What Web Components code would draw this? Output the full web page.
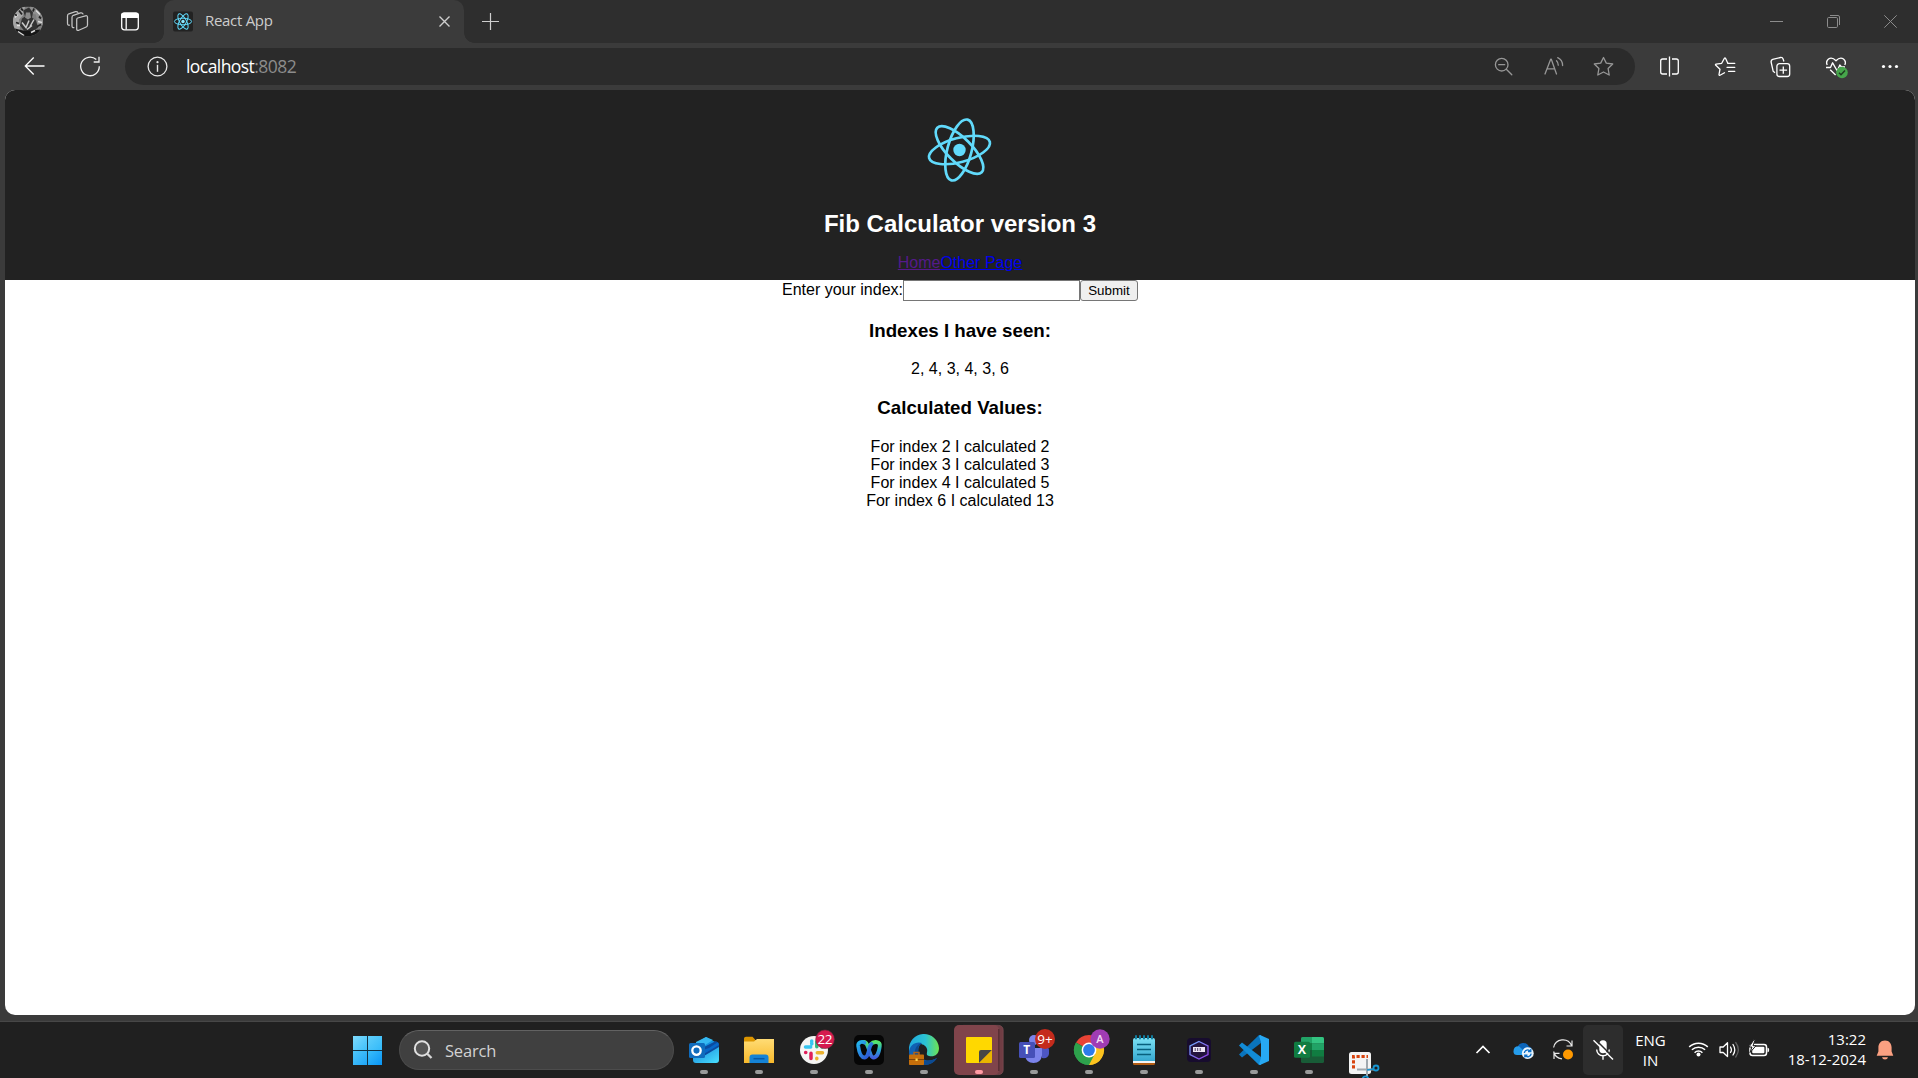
<!DOCTYPE html>
<html lang="en">
<head>
<meta charset="utf-8">
<title>React App</title>
<style>
html,body{margin:0;height:100%;overflow:hidden;background:#3b3b3b}
body{font-family:"Open Sans","Noto Sans",sans-serif}
</style>
</head>
<body>
<desktop-screen>
  <tab-strip slot="tabs"><span>React App</span></tab-strip>
  <nav-bar slot="nav"><span slot="host">localhost</span><span slot="port">:8082</span></nav-bar>
  <fib-page slot="page">
    <app-header slot="header"><span>Fib Calculator version 3</span></app-header>
    <index-form></index-form>
    <result-section heading="Indexes I have seen:">2, 4, 3, 4, 3, 6</result-section>
    <result-section heading="Calculated Values:">
      <div>For index 2 I calculated 2</div>
      <div>For index 3 I calculated 3</div>
      <div>For index 4 I calculated 5</div>
      <div>For index 6 I calculated 13</div>
    </result-section>
  </fib-page>
  <task-bar slot="taskbar"></task-bar>
</desktop-screen>

<script>
const define = (name, html, setup) => customElements.define(name, class extends HTMLElement {
  constructor() {
    super();
    this.attachShadow({mode: 'open'}).innerHTML = html;
  }
  connectedCallback() { if (setup) setup(this, this.shadowRoot); }
});

/* Line icons: each is drawn round the origin, in CSS pixels */
const ICONS = {
  avatar: `<defs><clipPath id="c"><circle r="15"/></clipPath><filter id="b"><feGaussianBlur stdDeviation=".5"/></filter></defs>
    <g clip-path="url(#c)"><rect x="-15" y="-15" width="30" height="30" fill="#7d7d7d"/><g filter="url(#b)">
    <path d="M-15-15H-3L-5-6-9-2-8 8-15 10Z" fill="#a6a6a6"/><path d="M2-15H15V4L9 2 8-7 3-8Z" fill="#8e8e8e"/>
    <path d="M-5-11L1-14 5-9 4-4 8-1 10 6 5 10-4 9-8 4-6-3-3-5Z" fill="#333"/><path d="M-2-9h4l1 5-3 2-3-2z" fill="#8a8a8a"/>
    <path d="M-6 1l4 5 3-7M2 5l4-7M-1 8l5-4" stroke="#c9c9c9" stroke-width="1.5" fill="none"/>
    <path d="M-13 7l8 2 9 0 8-1-1 7H-12z" fill="#191919"/><path d="M-10 10l6 4M3 11l4-2M-13-4l3-3M-11 4h3M8-11l4 4M10 0l4 1" stroke="#dedede" stroke-width="1.4"/>
    <path d="M-9-11l3 4M6-13l-1 3M-12 1l3 1M9 5l4-2M-13-7l2 1M11-5l2 2M-7-13l2 2" stroke="#222" stroke-width="1.8"/></g></g>`,
  workspaces: `<g fill="none" stroke="#c4c4c4" stroke-width="1.25" stroke-linejoin="round" stroke-linecap="round"><path d="M.2-3.5L8-5.7Q10-6.100 10-4.300V3.500Q10 5 8.700 5.500L1.300 8.800Q-.8 9.500-.8 7.400V-1.800Q-.8-3.200.2-3.500Z"/><path d="M-3.600 6.100Q-5.500 6.300-5.500 4.200V-4.100Q-5.500-5.600-4.100-6.200L3-8.600Q4.900-9.100 5.500-7.600"/><path d="M-8.100 3.700Q-10 3.900-10 1.800V-5.600Q-10-7.100-8.600-7.700L-2-9.900Q-.3-10.300.4-9"/></g>`,
  panel: `<rect x="-8.300" y="-8.300" width="16.600" height="16.600" rx="2.800" fill="none" stroke="#fff" stroke-width="1.3"/><path d="M-9-3.500V-6Q-9-9-6-9H6Q9-9 9-6V-3.500Z" fill="#fff"/><path d="M-3.800-4V8" stroke="#fff" stroke-width="1.3"/>`,
  favicon: `<rect x="-10" y="-10" width="20" height="20" rx="2" fill="#222"/><g fill="none" stroke="#61dafb" stroke-width="1"><ellipse rx="8.600" ry="3.300"/><ellipse rx="8.600" ry="3.300" transform="rotate(60)"/><ellipse rx="8.600" ry="3.300" transform="rotate(120)"/></g><circle r="1.700" fill="#8be8ff"/>`,
  tabclose: `<path d="M-5-5L5 5M5-5L-5 5" stroke="#cfcfcf" stroke-width="1.400"/>`,
  plus: `<path d="M-8.500 0H8.500M0-8.500V8.500" stroke="#cfcfcf" stroke-width="1.200"/>`,
  min: `<path d="M-6.500 0H6.500" stroke="#8c8c8c"/>`,
  restore: `<g fill="none" stroke="#8c8c8c"><rect x="-6.500" y="-4" width="10" height="10" rx="1.200"/><path d="M-4-6H4Q5.500-6 5.500-4.500V3.500"/></g>`,
  close: `<path d="M-6.200-6.200L6.200 6.200M6.200-6.200L-6.200 6.200" stroke="#8c8c8c"/>`,
  back: `<path d="M10-.5H-9M-.8-9L-9.200-.5-.8 8" fill="none" stroke="#fff" stroke-width="1.300"/>`,
  reload: `<path d="M6.300-6.900A9.300 9.300 0 1 0 9.300-.2M9-9.700V-4.500H3.700" fill="none" stroke="#f2f2f2" stroke-width="1.300"/>`,
  info: `<circle r="9.400" fill="none" stroke="#e6e6e6" stroke-width="1.300"/><path d="M0-1.700V5.300" stroke="#e6e6e6" stroke-width="1.400"/><circle cy="-4.300" r="1.100" fill="#e6e6e6"/>`,
  zoomout: `<g fill="none" stroke="#979797" stroke-width="1.300" stroke-linecap="round"><circle cx="-1.800" cy="-1.800" r="6.300"/><path d="M2.800 2.800L8.300 8.300M-4.800-1.800H1.200"/></g>`,
  read: `<g fill="none" stroke="#979797" stroke-width="1.300" stroke-linecap="round" stroke-linejoin="round"><path d="M-9 7.500L-3.300-7.300H-2.700L2.500 7.500M-6.700 2.300H.6"/><path d="M2.500-5.700Q4.200-4 4.300-1.300M3.700-8.800Q8.500-6.500 8.600-1"/></g>`,
  star: `<path d="M0-9L2.800-3.400 9.200-2.500 4.600 2 5.700 8.500 0 5.500-5.700 8.500-4.600 2-9.200-2.500-2.800-3.400Z" fill="none" stroke="#979797" stroke-width="1.300" stroke-linejoin="round"/>`,
  split: `<g fill="none" stroke="#fff" stroke-width="1.300"><path d="M-2.500-7.500H-6.800Q-8.800-7.500-8.800-5.500V5.500Q-8.800 7.500-6.800 7.500H-2.500M2.500-7.500H6.800Q8.800-7.500 8.800-5.500V5.500Q8.800 7.500 6.800 7.500H2.500M0-10V10"/></g>`,
  favs: `<g fill="none" stroke="#fff" stroke-width="1.300" stroke-linejoin="round" stroke-linecap="round"><path d="M2.800-3.200L.5-8.200Q0-9-.6-8.200L-3.300-3.200-9-2.400Q-10-2-9.200-1.300L-5 2.700-6 8Q-6 9.200-5 8.700L-.5 6.300"/><path d="M3-3.200H9.800M2 .8H9.800M3.500 4.800H9.800"/></g>`,
  collections: `<g fill="none" stroke="#fff" stroke-width="1.300" stroke-linejoin="round"><rect x="-3.600" y="-2.800" width="12.800" height="12.800" rx="2.500"/><path d="M2.800-.1V7.300M-1 3.600H6.600M-5.500 6.200L-7.300 4.800-9.400-4.500Q-9.700-6.500-7.800-7.200L0-9Q2-9.300 2.600-7.500L3.400-5"/></g>`,
  heart: `<g fill="none" stroke="#fff" stroke-width="1.350" stroke-linejoin="round"><path d="M-8.800-1.500Q-10.500-5-7.500-7.500-4-9.800 0-5.800 4-9.800 7.500-7.500 10.500-5 8.800-1.500M-5.800 3.200L-.4 8.600"/><path d="M-10 1H-5.500L-3.400-3.700 1.300 4.500 3.800-1.500 5.500.5H9"/></g><circle cx="6" cy="6" r="5.800" fill="#46a64b"/><path d="M3 6.200L5 8.200 9 4" stroke="#1d3b20" stroke-width="1.500" fill="none"/>`,
  dots: `<g fill="#fff"><circle cx="-6.500" r="1.600"/><circle r="1.600"/><circle cx="6.500" r="1.600"/></g>`,
  chevron: `<path d="M-6.500 3.500L0-3 6.500 3.500" fill="none" stroke="#fff" stroke-width="1.700"/>`,
  onedrive: `<path d="M-5.500-2A6 6 0 0 1 5.800-3Q9-2.500 9 1L-3 5Z" fill="#0c64b8"/><path d="M-9.500 2Q-9.500-3.500-4-3.200L5 5.500H-6Q-9.500 5.500-9.500 2Z" fill="#259ceb"/><circle cx="4.800" cy="3.700" r="5.900" fill="#e8f4fd"/><path d="M1.300 3.500A3.500 3.500 0 0 1 7.500 1.700M7.800-.5V2H5M8.200 4.100A3.500 3.500 0 0 1 2 5.900M1.800 8.100V5.700H4.500" fill="none" stroke="#0b6fc8" stroke-width="1.300"/>`,
  sync: `<path d="M-9.400-2A9.500 9.500 0 0 1 8.600-4M9-9V-3.500H3.500M-9.400 2A9.500 9.500 0 0 0-1 9.300M-9 9.500V3.900H-3.500" fill="none" stroke="#e8e8e8" stroke-width="1.200"/><circle cx="5" cy="5" r="5" fill="#f90"/>`,
  mic: `<rect x="-3.700" y="-9.800" width="7.400" height="13" rx="3.700" fill="#fff"/><path d="M-6.300-.5A6.300 6.300 0 0 0 6.300-.5M0 6V9.800" fill="none" stroke="#fff" stroke-width="1.400"/><path d="M-8.300-11.300L11 8" stroke="#2d2d2d" stroke-width="1.500"/><path d="M-9.500-9.800L10 9.500" stroke="#fff" stroke-width="1.400"/>`,
  wifi: `<g fill="none" stroke="#fff" stroke-width="1.500"><path d="M-9.300-2.600A13.500 13.500 0 0 1 9.300-2.600M-6.600.3A9.700 9.700 0 0 1 6.600.3M-3.900 3.200A5.600 5.600 0 0 1 3.900 3.200"/></g><circle cy="5" r="2" fill="#fff"/>`,
  speaker: `<g fill="none" stroke="#fff" stroke-width="1.300" stroke-linejoin="round" stroke-linecap="round"><path d="M-9-2.500H-5.800L-1.500-6.700V7L-5.800 3H-9Z"/><path d="M1.500-2.500Q3.300.2 1.500 3M4-5Q7.500.2 4 5.500"/><path d="M6.700-7Q12 .2 6.700 7.500" stroke="#5e5e5e"/></g>`,
  battery: `<rect x="-9" y="-5" width="16.500" height="11" rx="2.500" fill="none" stroke="#fff" stroke-width="1.500"/><rect x="-6.800" y="-2.800" width="12.200" height="6.600" rx="1" fill="#fff"/><path d="M8.500-1.800Q10.200-1.800 10.200.6 10.200 2.800 8.500 2.800Z" fill="#fff"/><path d="M-5-10L-10-2.500H-7L-9 3-3-3.800H-6L-3.800-10Z" fill="#fff" stroke="#202020" stroke-width="1"/>`,
  bell: `<path d="M0-9C-4.500-9-6.600-5.500-6.600-2V2L-8.300 6.300H8.300L6.600 2V-2C6.600-5.500 4.500-9 0-9Z" fill="#fba081"/><path d="M-3 7.700H3Q2.500 10 0 10T-3 7.700Z" fill="#fba081"/>`
};

/* Taskbar application icons, drawn round the middle of their cell */
const APPS = {
  outlook: `<defs><linearGradient id="g" x2="1" y2="1"><stop offset="0" stop-color="#1683d8"/><stop offset="1" stop-color="#49e0ff"/></linearGradient></defs>
    <path d="M-12-4L2-13 15-6V2L0 10-12 6Z" fill="#1490df"/><path d="M-8-8L2-13 9-10-8 1Z" fill="#35b8f1"/><path d="M-2-2L12-9 15-6V0L2 7Z" fill="#0a4ba0"/><path d="M-7 2L5-2 14-8 15-5-2 5Z" fill="#0867c8"/><path d="M-11 4L0 6 15-3V10Q15 13 12 13H-8Q-11 13-11 10Z" fill="url(#g)"/>
    <rect x="-15" y="-7" width="16" height="15" rx="1.500" fill="#0f6cbd"/><circle cx="-7.500" cy=".6" r="4.200" fill="none" stroke="#fff" stroke-width="2.300"/>`,
  folder: `<defs><linearGradient id="g" x2="0" y2="1"><stop offset="0" stop-color="#ffdc75"/><stop offset="1" stop-color="#f8b92b"/></linearGradient></defs>
    <path d="M-15-11.500Q-15-13.300-13-13.300H-6.500L-3.500-10H15V-6H-15Z" fill="#dc9500"/><path d="M-15-8.500H-5L-2-11H15V13H-15Z" fill="url(#g)"/><path d="M-9.500 13V7.500Q-9.500 4.500-6.500 4.500H6.500Q9.500 4.500 9.500 7.500V13Z" fill="#1583d6"/><path d="M-5.500 8.700H5.500" stroke="#0759a5" stroke-width="1.500"/>`,
  slack: `<circle r="14" fill="#f5f5f3"/><g stroke-width="3.500" stroke-linecap="round"><path d="M-8.500-3H-3.300M-2.300-9v.4M-2.300-7L-2.200-6" stroke="#36c5f0"/><path d="M2.800-8.500V-3.300M8-3h.5" stroke="#2eb67d"/><path d="M-3 3.200V8.500M-8.200 2.500h-.2" stroke="#e01e5a"/><path d="M3.300 2.700H8.500M2.800 8.200v.5" stroke="#ecb22e"/></g><circle cx="11" cy="-10.700" r="9.300" fill="#d51a4f" stroke="#7d2940" stroke-width=".6"/><text x="10.800" y="-6" text-anchor="middle" font-size="13.500" fill="#fff" letter-spacing="-.5">22</text>`,
  webex: `<defs><linearGradient id="g" x2="1" y2="1"><stop offset="0" stop-color="#23b6ed"/><stop offset="1" stop-color="#3048cf"/></linearGradient><linearGradient id="h" x2="0" y2="1"><stop offset="0" stop-color="#56e66a"/><stop offset=".5" stop-color="#26a9cf"/><stop offset="1" stop-color="#4160df"/></linearGradient></defs><rect x="-15" y="-15" width="30" height="30" rx="5" fill="#060606"/><path d="M1.500-5.500C5-9.500 11.500-8.500 10.800-4 10 3 7.500 7.500 4.500 7.500 0 7.500 0-8-5-8" fill="none" stroke="url(#h)" stroke-width="3.800" stroke-linecap="round"/><path d="M2.300-6C-.5-3 0 7.500-4.500 7.500-8 7.500-10 2-10.800-4-11.200-8-7-9-4.500-7.500" fill="none" stroke="url(#g)" stroke-width="3.800" stroke-linecap="round"/>`,
  edge: `<defs><linearGradient id="g" x2="1"><stop offset="0" stop-color="#20aadf"/><stop offset=".55" stop-color="#2bc3d4"/><stop offset="1" stop-color="#6ee451"/></linearGradient></defs><path d="M-15 0A15 15 0 0 1 15-2C15 5 10 7 5 6 1 5 4 2 3-1 2-5-4-8-10-4Q-14-2-15 3Z" fill="url(#g)"/><path d="M-15 3C-15-5-8-9-2-7-7-4-7 5-1 9 4 12 9 10 13 8 8 16-3 17-10 11Q-15 7-15 3Z" fill="#1161b3"/><path d="M-2-7C-8-4-7 5-1 10 4 12 9 10 13 8 8 16-1 16-5 13-11 8-11-5-2-7Z" fill="#0c4a91"/><path d="M-10 5V2.500H-5V5" fill="none" stroke="#b36316" stroke-width="1.500"/><rect x="-15" y="4.500" width="15" height="10.500" rx=".8" fill="#c66f0b"/><path d="M-15 9.500H0" stroke="#7e4308"/><rect x="-8.500" y="8.500" width="2.200" height="2.500" fill="#ffd24c"/>`,
  sticky: `<rect x="-20" y="-24.600" width="44.200" height="49.200" rx="4.500" fill="#703d44" stroke="#87545b" stroke-width=".6"/><rect x="-25" y="-25" width="45" height="50" rx="5" fill="#80444b"/><path d="M19.800-21V21" stroke="#3b2024" stroke-width=".8"/><path d="M-13-12Q-13-13-12-13H12Q13-13 13-12V0L0 13H-12Q-13 13-13 12Z" fill="#ffd800"/><path d="M13 0L0 13V2Q0 0 2 0Z" fill="#464646"/><path d="M13 0V12Q13 13 12 13H0Z" fill="#e9b400"/>`,
  teams: `<circle cx="10" cy="-5" r="4" fill="#4d56c4"/><circle cx="0" cy="-10" r="5" fill="#7b83eb"/><path d="M4-2H14Q15-2 15 0V4Q14 9 8 8Z" fill="#4d56c4"/><path d="M-9-2H8V5Q7 13-.5 13T-9 5Z" fill="#7b83eb"/><rect x="-15" y="-8" width="16" height="16" rx="1.500" fill="#4650b8"/><text x="-7.300" y="4.300" text-anchor="middle" font-size="12" font-weight="700" fill="#fff">T</text><circle cx="11" cy="-11" r="10" fill="#c42b1c"/><text x="11" y="-6.500" text-anchor="middle" font-size="13.500" fill="#fff">9+</text>`,
  chrome: `<path d="M0 0L-13-7.500A15 15 0 0 1 13-7.500Z" fill="#e94335"/><path d="M0 0L13-7.500A15 15 0 0 1 0 15Z" fill="#fcc31e"/><path d="M0 0L0 15A15 15 0 0 1-13-7.500Z" fill="#2da14c"/><path d="M0-7H13A15 15 0 0 1 0 15L6 3.500Z" fill="#fcc31e"/><path d="M-6 3.500L-13-7.500A15 15 0 0 0 0 15L6 3.500Z" fill="#2da14c"/><circle r="7.400" fill="#fff"/><circle r="5.900" fill="#2d7bea"/><circle cx="11" cy="-11" r="9.700" fill="#a03cb4"/><text x="11" y="-7" text-anchor="middle" font-size="11" font-weight="600" fill="#f3ddf5">A</text>`,
  notepad: `<defs><linearGradient id="g" x2="0" y2="1"><stop offset="0" stop-color="#7be0f3"/><stop offset="1" stop-color="#36a9d1"/></linearGradient></defs><rect x="-11" y="9" width="22" height="6" rx="1.500" fill="#b35c12"/><rect x="-11" y="7" width="22" height="6" fill="#f4f4f4"/><path d="M-11-10Q-11-12-9-12H9Q11-12 11-10V11H-11Z" fill="url(#g)"/><path d="M-7-5.500H7M-7-.5H7M-7 4.500H7" stroke="#08607d" stroke-width="1.700"/><path d="M-8-14v2.500M-4-14v2.500M0-14v2.500M4-14v2.500M8-14v2.500" stroke="#107c9e" stroke-width="2" stroke-linecap="round"/>`,
  container: `<defs><linearGradient id="g" x2="1" y2="1"><stop offset="0" stop-color="#6fb0ff"/><stop offset="1" stop-color="#9435e5"/></linearGradient></defs><rect x="-12" y="-12" width="24" height="24" rx="4" fill="#170c2e"/><path d="M0-8.500L9-4V4.500L0 9-9 4.500V-4Z" fill="#24143f" stroke="url(#g)" stroke-width="1.300"/><rect x="-6" y="-3" width="12" height="5" fill="#eee7f5"/><path d="M-3.800-2V1M-1.300-2V1M1.200-2V1" stroke="#54446b" stroke-width="1"/>`,
  vscode: `<path d="M-15 4.500L5-15H7V-7L-12 7.500Z" fill="#0a74bd"/><path d="M-15-4.500L-12-7.500 7 7V15H5Z" fill="#128bd6"/><path d="M6-15L15-11V11L6 15 5 14 7 8V-8L5-14Z" fill="#27a9f4"/>`,
  excel: `<rect x="-8" y="-13" width="23" height="26" rx="1.500" fill="#185c37"/><path d="M-8-11.500Q-8-13-6.500-13H3V-6.500H-8Z" fill="#21a366"/><path d="M3-13H13.500Q15-13 15-11.500V-6.500H3Z" fill="#33c481"/><path d="M-8-6.500H3V0H-8Z" fill="#107c41"/><path d="M3-6.500H15V0H3Z" fill="#21a366"/><path d="M3 0H15V6.500H3Z" fill="#107c41"/><rect x="-15" y="-8.300" width="16" height="16" rx="1.500" fill="#107c41"/><text x="-7.100" y="4.200" text-anchor="middle" font-size="12.500" font-weight="700" fill="#fff">X</text>`,
  snip: `<rect x="-15" y="2" width="22" height="22" rx="2.500" fill="#f4f4f4"/><path d="M-10.500 18.500V6.500H4" fill="none" stroke="#d8430e" stroke-width="3" stroke-dasharray="3.200 1.800"/><path d="M3 9V26M-7 19.500H10" fill="none" stroke="#a0a8ae" stroke-width="2"/><circle cx="12" cy="18" r="2.500" fill="none" stroke="#1795d1" stroke-width="1.800"/><circle cx="1.500" cy="29" r="2.700" fill="none" stroke="#1795d1" stroke-width="1.800"/><path d="M3 20L10 19" stroke="#1795d1" stroke-width="1.500"/>`
};

/* An odd cell gets an odd canvas, so that its centre falls on a pixel */
define('ui-icon', `<style>:host{display:flex;align-items:center;justify-content:center;flex:none}svg{display:block;overflow:visible}</style><svg></svg>`,
  (el, root) => {
    const w = +el.getAttribute('w'), cw = w % 2 ? 31 : 32, ch = el.getAttribute('name') === 'mic' ? 32 : 31;
    el.style.width = w + 'px';
    const svg = root.querySelector('svg');
    svg.setAttribute('width', cw);
    svg.setAttribute('height', ch);
    svg.setAttribute('viewBox', `${-cw / 2} ${-ch / 2} ${cw} ${ch}`);
    svg.innerHTML = ICONS[el.getAttribute('name')];
  });

define('app-button', `<style>:host{display:block;flex:none;width:55px;height:57px}svg{display:block;overflow:hidden;font-family:"Open Sans",sans-serif}</style><svg width="55" height="57" viewBox="-28 -29 55 57"></svg>`,
  (el, root) => {
    const name = el.getAttribute('app');
    const mark = name === 'snip' ? '' : `<rect x="-4" y="20" width="8" height="4" rx="2" fill="${name === 'sticky' ? '#ff9ba5' : '#9a9a9a'}"/>`;
    root.querySelector('svg').innerHTML = APPS[name] + mark;
  });

define('desktop-screen', `<style>:host{display:flex;flex-direction:column;width:1918px;height:1078px;background:#3b3b3b}
  .page{flex:1;min-height:0;margin:0 3px 6px 5px;border-radius:10px;overflow:hidden;background:#fff;display:flex;flex-direction:column}</style>
  <slot name="tabs"></slot><slot name="nav"></slot><div class="page"><slot name="page"></slot></div><slot name="taskbar"></slot>`);

define('tab-strip', `<style>:host{display:flex;height:43px;flex:none;background:#2e2e2e;align-items:stretch}
  .tab{width:300px;margin-left:3px;background:#3b3b3b;border-radius:10px 10px 0 0;display:flex;align-items:stretch;position:relative}
  .tab::before,.tab::after{content:"";position:absolute;bottom:0;width:10px;height:10px}
  .tab::before{left:-10px;background:radial-gradient(circle at 0 0,transparent 9.500px,#3b3b3b 10px)}
  .tab::after{right:-10px;background:radial-gradient(circle at 100% 0,transparent 9.500px,#3b3b3b 10px)}
  .title{flex:1;padding-left:3px;font-size:15px;line-height:41px;color:#cdcdcd;letter-spacing:-.3px}
  .grow{flex:1}</style>
  <ui-icon name="avatar" w="56"></ui-icon><ui-icon name="workspaces" w="43"></ui-icon><ui-icon name="panel" w="62"></ui-icon>
  <div class="tab"><ui-icon name="favicon" w="38"></ui-icon><div class="title"><slot></slot></div><ui-icon name="tabclose" w="39"></ui-icon></div>
  <ui-icon name="plus" w="53"></ui-icon><div class="grow"></div>
  <ui-icon name="min" w="57"></ui-icon><ui-icon name="restore" w="58"></ui-icon><ui-icon name="close" w="55"></ui-icon>`);

define('nav-bar', `<style>:host{display:flex;height:47px;flex:none;background:#3b3b3b;align-items:center}
  .pill{width:1510px;height:37px;border-radius:19px;background:#2b2b2b;display:flex;align-items:center}
  .url{flex:1;padding:0 0 0 1px;font-size:17.500px;line-height:35px;color:#fff;letter-spacing:-.56px}
  .port{color:#8c8c8c}</style>
  <ui-icon name="back" w="69"></ui-icon><ui-icon name="reload" w="42"></ui-icon><div style="width:14px"></div>
  <div class="pill"><div style="width:5px"></div><ui-icon name="info" w="55"></ui-icon><div class="url"><slot name="host"></slot><span class="port"><slot name="port"></slot></span></div>
  <ui-icon name="zoomout" w="51"></ui-icon><ui-icon name="read" w="50"></ui-icon><ui-icon name="star" w="49"></ui-icon><div style="width:7px"></div></div>
  <div style="width:7px"></div><ui-icon name="split" w="55"></ui-icon><ui-icon name="favs" w="56"></ui-icon><ui-icon name="collections" w="55"></ui-icon><ui-icon name="heart" w="56"></ui-icon><ui-icon name="dots" w="52"></ui-icon>`);

define('fib-page', `<style>:host{display:block;text-align:center;font:16px/18px "Liberation Sans",Arial,sans-serif;color:#000}</style><slot name="header"></slot><slot></slot>`);

define('app-header', `<style>:host{display:block;box-sizing:border-box;height:190px;padding:20px;background:#222}
  svg{display:block;margin:0 auto;padding-bottom:4px}
  h1{margin:16px 0 17px;font-size:24px;line-height:27px;color:#fff}
  a{text-decoration:underline}.visited{color:#551a8b}.link{color:#0000ee}</style>
  <svg width="114" height="80" viewBox="-56.500 -40 114 80"><g fill="none" stroke="#61dafb" stroke-width="2.700" transform="rotate(-15)"><ellipse rx="31.400" ry="12.100"/><ellipse rx="31.400" ry="12.100" transform="rotate(60)"/><ellipse rx="31.400" ry="12.100" transform="rotate(120)"/></g><circle r="6.200" fill="#61dafb"/></svg>
  <h1><slot></slot></h1><div><a class="visited">Home</a><a class="link">Other Page</a></div>`);

define('index-form', `<style>:host{display:flex;justify-content:center;height:21px}label{line-height:19px}
  input{box-sizing:border-box;width:177px;height:21px;padding:1px 2px;border:1px solid #767676;border-radius:0;background:#fff;margin:0}
  button{box-sizing:border-box;width:58px;height:21px;padding:0;margin:0;border:1px solid #767676;border-radius:3px;background:#efefef;color:#000;font:13.333px "Liberation Sans",Arial,sans-serif}</style>
  <label>Enter your index:</label><input><button>Submit</button>`);

define('result-section', `<style>:host{display:block}h3{font-size:18.720px;line-height:22px;margin:18.720px 0}</style><h3></h3><slot></slot>`,
  (el, root) => { root.querySelector('h3').textContent = el.getAttribute('heading'); });

define('task-bar', `<style>:host{display:flex;height:57px;flex:none;box-sizing:border-box;background:#202020;box-shadow:inset 0 1px #474747;align-items:center;color:#fff;font-size:15px;line-height:20px}
  .start{width:29px;height:29px;margin:2px 17px 0 353px;display:grid;grid-template-columns:14px 14px;grid-template-rows:14px 14px;gap:1px;background:#123243}
  .start i{background:linear-gradient(135deg,#7edafc,#3fc0fa)}.start i:nth-child(2){background:linear-gradient(135deg,#61cffb,#31b9fa)}.start i:nth-child(3){background:linear-gradient(135deg,#4fc7fa,#1fa6f8)}.start i:nth-child(4){background:linear-gradient(135deg,#3abefa,#0995f5)}
  .search{box-sizing:border-box;width:275px;height:40px;margin:1px 2px 0 0;border:1px solid #4c4c4c;border-top-color:#626262;border-radius:20px;background:#404040;display:flex;align-items:center;color:#d2d2d2;font-size:16.500px;letter-spacing:-.2px}
  .search svg{margin:0 12px 0 13px}
  .search span{padding-top:1px}
  .tray{display:flex;align-items:center;margin-left:72px;height:57px}
  .tile{width:40px;height:50px;margin-top:1px;border-radius:5px;background:#2d2d2d;display:flex}
  .lang{width:55px;text-align:center}.clock{width:92px;text-align:right;margin:-2px 5px 0 0}</style>
  <div class="start"><i></i><i></i><i></i><i></i></div>
  <div class="search"><svg width="20" height="20" viewBox="0 0 20 20"><circle cx="9" cy="8.500" r="7.200" fill="#555" stroke="#e0e0e0" stroke-width="2"/><path d="M14 13.500L18.500 18" stroke="#d8d8d8" stroke-width="2.300"/></svg><span>Search</span></div>
  ${Object.keys(APPS).map(a => `<app-button app="${a}"></app-button>`).join('')}
  <div class="tray"><ui-icon name="chevron" w="40"></ui-icon><ui-icon name="onedrive" w="40"></ui-icon><ui-icon name="sync" w="40"></ui-icon>
  <div class="tile"><ui-icon name="mic" w="40"></ui-icon></div><div class="lang">ENG<br>IN</div><div style="width:5px"></div>
  <ui-icon name="wifi" w="31"></ui-icon><ui-icon name="speaker" w="30"></ui-icon><ui-icon name="battery" w="30"></ui-icon>
  <div class="clock">13:22<br>18-12-2024</div><ui-icon name="bell" w="28"></ui-icon></div>`);
</script>
</body>
</html>
